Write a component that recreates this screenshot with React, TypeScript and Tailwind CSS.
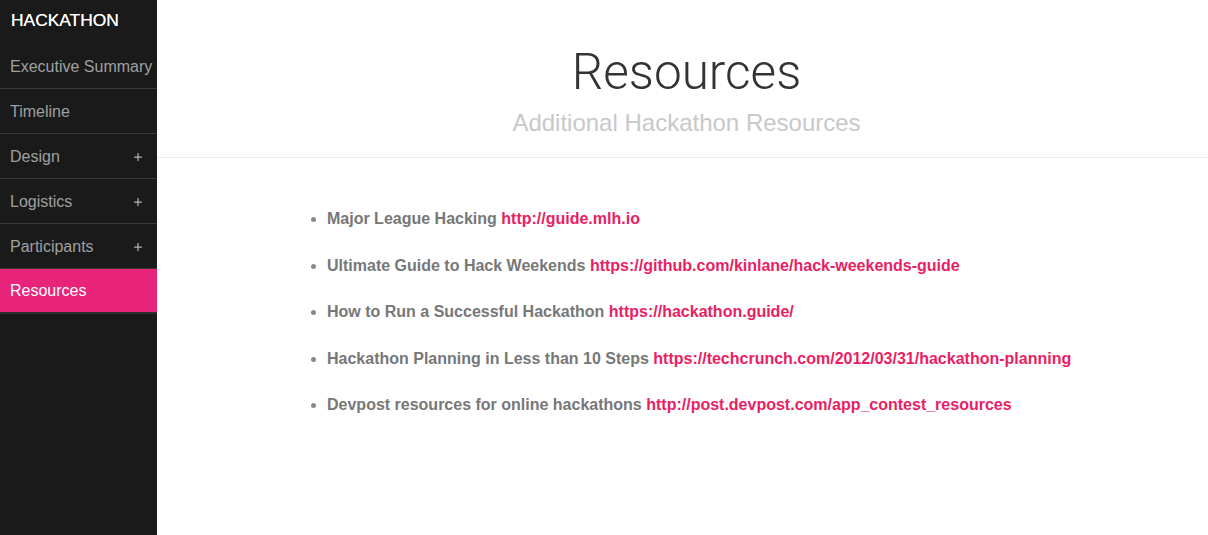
import { Plus } from 'lucide-react'

const MENU = [
  { label: 'Executive Summary', sub: false },
  { label: 'Timeline', sub: false },
  { label: 'Design', sub: true },
  { label: 'Logistics', sub: true },
  { label: 'Participants', sub: true },
]

const RESSOURCES = [
  { nom: 'Major League Hacking', url: 'http://guide.mlh.io' },
  { nom: 'Ultimate Guide to Hack Weekends', url: 'https://github.com/kinlane/hack-weekends-guide' },
  { nom: 'How to Run a Successful Hackathon', url: 'https://hackathon.guide/' },
  { nom: 'Hackathon Planning in Less than 10 Steps', url: 'https://techcrunch.com/2012/03/31/hackathon-planning' },
  { nom: 'Devpost resources for online hackathons', url: 'http://post.devpost.com/app_contest_resources' },
]

export default function App() {
  return (
    <div className="flex h-[535px] w-full bg-white font-['Liberation_Sans',Arial,sans-serif]">
      <aside className="w-[157px] shrink-0 bg-[#1a1a1a] flex flex-col">
        <div className="h-[44px] flex items-center pl-[11px] pb-[4px] text-[17.4px] text-white [text-shadow:0_0_0.4px_#fff]">HACKATHON</div>
        {MENU.map(m => (
          <div key={m.label} className="h-[45px] flex items-center justify-between pl-[10px] pr-[13px] pt-[1px] border-b border-[#383838] text-[16px] text-[#a0a0a0] whitespace-nowrap">
            <span>{m.label}</span>
            {m.sub && <Plus size={12} strokeWidth={2.5} className="text-[#b0b0b0]" />}
          </div>
        ))}
        <div className="h-[45px] flex items-center pl-[10px] bg-[#e8247a] text-[16px] text-white border-b-[2px] border-[#2e2e2e]">
          Resources
        </div>
      </aside>

      <main className="flex-1 flex flex-col">
        <div className="flex flex-col items-center pl-[8px] pt-[44px] h-[158px] border-b border-[#ececec]">
          <h1 className="text-[49.5px] leading-[56px] font-light text-[#333] font-['Roboto',sans-serif]">Resources</h1>
          <p className="text-[24px] leading-[30px] text-[#c8c8c8] mt-[8px]">Additional Hackathon Resources</p>
        </div>

        <ul className="pl-[152px] pt-[50px] flex flex-col gap-[24.5px] list-disc marker:text-[#888]">
          {RESSOURCES.map(r => (
            <li key={r.url} className="ml-[18px] text-[16px] leading-[22px] font-bold text-[#777]">
              {r.nom} <a href="#" className="text-[#e91e63]">{r.url}</a>
            </li>
          ))}
        </ul>
      </main>
    </div>
  )
}
